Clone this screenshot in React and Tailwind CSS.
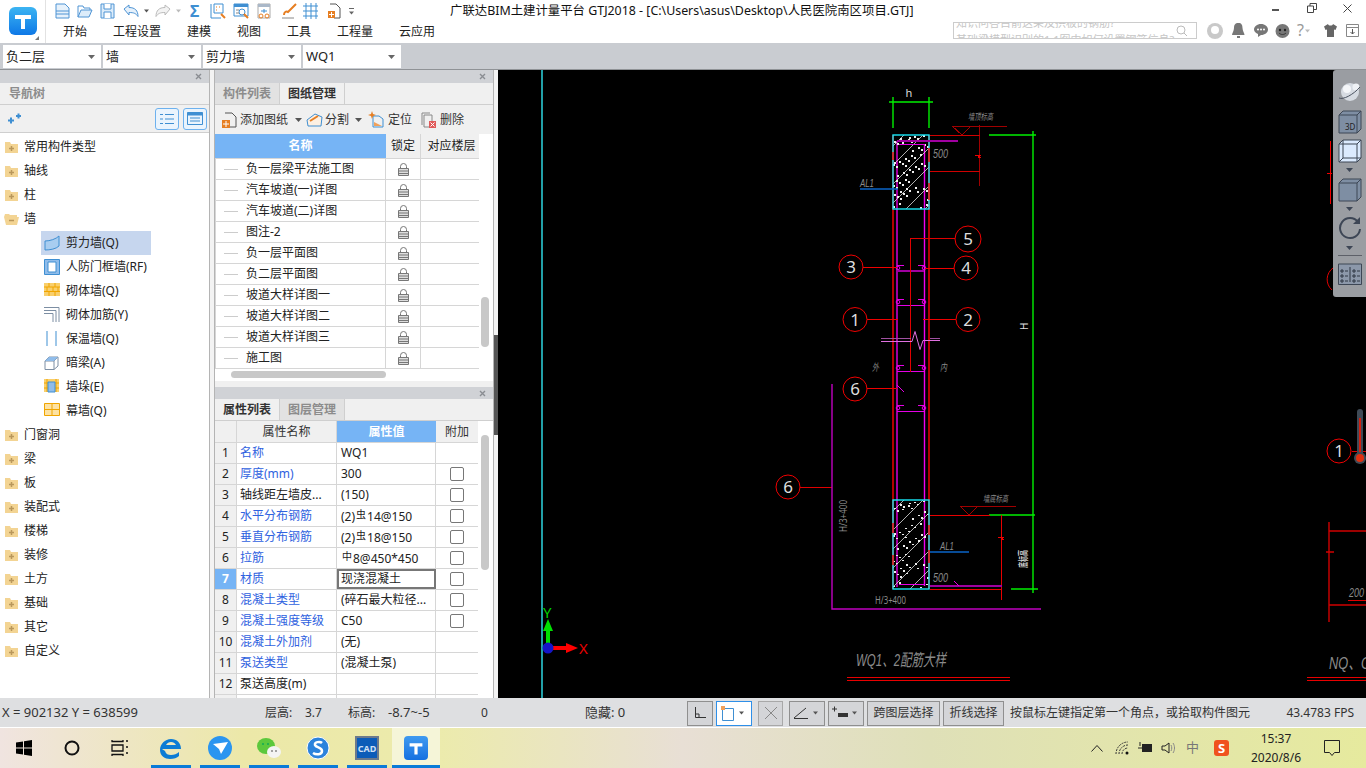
import React from 'react'

const menus = ['开始', '工程设置', '建模', '视图', '工具', '工程量', '云应用']
const combos = ['负二层', '墙', '剪力墙', 'WQ1']
const folders1 = ['常用构件类型', '轴线', '柱']
const folders2 = ['门窗洞', '梁', '板', '装配式', '楼梯', '装修', '土方', '基础', '其它', '自定义']
const drawings = ['负一层梁平法施工图', '汽车坡道(一)详图', '汽车坡道(二)详图', '图注-2', '负一层平面图', '负二层平面图', '坡道大样详图一', '坡道大样详图二', '坡道大样详图三', '施工图']

const Up = ({ children }) => <span className="text-[10px] align-[3px] mx-[1px]">{children}</span>

const props = [
  { name: '名称', value: 'WQ1', blue: true },
  { name: '厚度(mm)', value: '300', blue: true, check: true },
  { name: '轴线距左墙皮...', value: '(150)', check: true },
  { name: '水平分布钢筋', value: <>(2)<Up>虫</Up>14@150</>, blue: true, check: true },
  { name: '垂直分布钢筋', value: <>(2)<Up>虫</Up>18@150</>, blue: true, check: true },
  { name: '拉筋', value: <><Up>中</Up>8@450*450</>, blue: true, check: true },
  { name: '材质', value: '现浇混凝土', blue: true, check: true, active: true },
  { name: '混凝土类型', value: '(碎石最大粒径...', blue: true, check: true },
  { name: '混凝土强度等级', value: 'C50', blue: true, check: true },
  { name: '混凝土外加剂', value: '(无)', blue: true },
  { name: '泵送类型', value: '(混凝土泵)', blue: true },
  { name: '泵送高度(m)', value: '' },
]

const Caret = ({ className = '' }) => (
  <svg width="7" height="4" viewBox="0 0 7 4" className={className}><path d="M0 0h7L3.5 4z" fill="currentColor" /></svg>
)

const Close = () => (
  <svg width="7" height="7" viewBox="0 0 7 7" className="text-[#8a8d92]"><path d="M1 1l5 5M6 1L1 6" stroke="currentColor" strokeWidth="1.4" /></svg>
)

// quick access toolbar icons
const Ico = ({ w = 16, h = 16, children }) => (
  <svg width={w} height={h} viewBox={`0 0 ${w} ${h}`} fill="none" className="shrink-0">{children}</svg>
)

const TitleBar = () => (
  <div className="flex h-[43px] bg-white relative shrink-0">
    <div className="w-[46px] h-full border-r border-[#e2e2e2] flex items-center justify-center shrink-0 relative">
      <div className="w-7 h-7 rounded-md bg-gradient-to-b from-[#3cb4f2] to-[#0f78e6] flex items-center justify-center -mt-[1px]">
        <svg width="20" height="20" viewBox="0 0 20 20"><path d="M2 4h16v4h-6v10H8V8H2z" fill="#fff" /></svg>
      </div>
      <svg width="4" height="4" viewBox="0 0 4 4" className="absolute right-[6px] bottom-[3px]"><path d="M4 0v4H0z" fill="#777" /></svg>
    </div>
    <div className="flex flex-col pl-[9px] w-[400px] shrink-0">
      <div className="flex items-center h-[21px] pt-[1px]">
        <Ico w={15}><path d="M1 1h9l4 4v10H1z" stroke="#4f94d4" fill="#e6f1fb" /><path d="M1 8h13M1 11h13" stroke="#4f94d4" /></Ico>
        <span className="ml-[7px]"><Ico><path d="M1 14V3h5l1 2h6v2" stroke="#4f94d4" /><path d="M1 14l3-7h11l-3 7z" stroke="#4f94d4" fill="#dcecfa" /></Ico></span>
        <span className="ml-[7px]"><Ico w={15}><path d="M1 1h13v14H1z" stroke="#4f94d4" fill="#dcecfa" /><path d="M4 1v5h7V1M4 15v-6h7v6" stroke="#4f94d4" fill="#fff" /></Ico></span>
        <span className="ml-[8px] flex items-center gap-[5px]">
          <svg width="16" height="14" viewBox="0 0 16 14" fill="none"><path d="M1 5l5-4v2.500c6 0 9 3 9 9-2-3-4-4-9-4V11z" stroke="#4f94d4" fill="#e6f1fb" /></svg>
          <Caret className="text-[#555] w-[5px]" />
        </span>
        <span className="ml-[6px] flex items-center gap-[5px]">
          <svg width="16" height="14" viewBox="0 0 16 14" fill="none"><path d="M15 5l-5-4v2.500c-6 0-9 3-9 9 2-3 4-4 9-4V11z" stroke="#bbb" fill="#f3f3f3" /></svg>
          <Caret className="text-[#bbb] w-[5px]" />
        </span>
        <span className="ml-[9px] text-[#3f8fd2] text-[16px] leading-none font-bold w-[10px]">Σ</span>
        <span className="ml-[10px]"><Ico><path d="M1 1v14h10M4 1h9v9H4z" stroke="#3f8fd2" /><path d="M6 4h1M9 4h1M6 7h1" stroke="#e67e22" /><path d="M11 11l4 4" stroke="#e67e22" strokeWidth="2" /></Ico></span>
        <span className="ml-[7px]"><Ico><path d="M1 1h14v12H1z" stroke="#3f8fd2" /><path d="M1 1h14v3H1z" fill="#3f8fd2" /><circle cx="9" cy="9" r="3" stroke="#3f8fd2" /><path d="M3 7h3M3 10h3" stroke="#888" /><path d="M11 11l4 4" stroke="#e67e22" strokeWidth="2" /></Ico></span>
        <span className="ml-[8px]"><Ico w={14}><path d="M1 1h12v14H1z" stroke="#aaa" /><path d="M1 1h12v3H1z" fill="#aab8c8" /><path d="M4 8h6M7 6v4" stroke="#3f8fd2" /><circle cx="4" cy="13" r="2" stroke="#e67e22" /><circle cx="10" cy="13" r="2" stroke="#e67e22" /></Ico></span>
        <span className="ml-[10px]"><Ico><path d="M1 15h12" stroke="#888" /><path d="M3 12c0-3 2-4 4-3l8-8" stroke="#e67e22" strokeWidth="2" /></Ico></span>
        <span className="ml-[5px]"><Ico><path d="M1 3h15M1 8h15M1 13h15M4 0v16M9 0v16M14 0v16" stroke="#3f8fd2" /></Ico></span>
        <span className="ml-[9px]"><Ico w={14}><path d="M3 1h6l4 4v10H7" stroke="#555" /><path d="M1 8h7v7H1z" fill="#e67e22" /><path d="M4.500 9v5M2 11.500h5" stroke="#fff" /></Ico></span>
        <span className="ml-[8px] flex flex-col items-center gap-[2px]"><span className="w-[5px] h-[1px] bg-[#666]" /><Caret className="text-[#666] w-[5px]" /></span>
      </div>
      <div className="flex items-center h-[22px] pl-[8px] gap-[26px] text-xs text-[#222]">
        {menus.map((m) => <span key={m}>{m}</span>)}
      </div>
    </div>
    <div className="absolute left-[450px] top-[3px] text-[12.4px] leading-[15px] text-[#111] whitespace-nowrap">
      广联达BIM土建计量平台 GTJ2018 - [C:\Users\asus\Desktop\人民医院南区项目.GTJ]
    </div>
    <div className="absolute right-[14px] top-[3px] flex items-center">
      <span className="w-[7px] h-[2px] bg-[#555] mt-[3px]" />
      <svg width="10" height="10" viewBox="0 0 10 10" fill="none" className="ml-[28px]"><path d="M0.500 3h6v6.500h-6zM3 3V0.500h6.500v6H7" stroke="#444" /></svg>
      <svg width="9" height="9" viewBox="0 0 9 9" className="ml-[26px]"><path d="M0.500 0.500l8 8M8.500 0.500l-8 8" stroke="#444" /></svg>
    </div>
    <div className="ml-auto mr-[7px] mt-[22px] h-[17px] flex items-center">
      <div className="w-[244px] h-[17px] border border-[#ccc] overflow-hidden flex items-center relative mr-[10px]">
        <div className="text-[11px] leading-[17px] text-[#c6c6c6] pl-[2px] whitespace-nowrap">
          <div>知识问答目前这果及拱板的钢筋?</div>
          <div>基础梁模型识别的1:1图中如何设置钢筋信息?</div>
        </div>
        <svg width="12" height="12" viewBox="0 0 12 12" fill="none" className="absolute right-[8px] top-[2px]"><circle cx="5" cy="5" r="4" stroke="#bbb" /><path d="M8 8l3 3" stroke="#bbb" /></svg>
      </div>
      <svg width="16" height="16" viewBox="0 0 16 16"><circle cx="8" cy="8" r="8" fill="#c9c9c9" /><circle cx="8" cy="7" r="4" fill="#fff" /></svg>
      <svg width="13" height="15" viewBox="0 0 13 15" className="ml-[9px]"><path d="M6.500 0c3 0 4 2 4 5 0 3 2 5 2 7H0c0-2 2-4 2-7 0-3 1-5 4.500-5zM5 13h3v2H5z" fill="#777" /></svg>
      <svg width="14" height="13" viewBox="0 0 14 13" className="ml-[9px]"><path d="M7 0c4 0 7 2.500 7 5.500S11 11 7 11l-3 2v-3C2 9 0 7.500 0 5.500 0 2.500 3 0 7 0z" fill="#777" /><circle cx="4" cy="5.500" r="1" fill="#fff" /><circle cx="7" cy="5.500" r="1" fill="#fff" /><circle cx="10" cy="5.500" r="1" fill="#fff" /></svg>
      <svg width="15" height="15" viewBox="0 0 15 15" className="ml-[7px]"><circle cx="7.500" cy="8" r="7" fill="#777" /><circle cx="5" cy="7" r="1.200" fill="#222" /><circle cx="10" cy="7" r="1.200" fill="#222" /><path d="M4 10c2 2 5 2 7 0" stroke="#333" fill="none" /></svg>
      <span className="ml-[7px] flex items-center gap-[1px] text-[#999] text-[16px] leading-[15px]">?<Caret className="text-[#bbb] w-[5px]" /></span>
      <svg width="13" height="13" viewBox="0 0 13 13" className="ml-[14px]"><path d="M4 0L0 2.500 1.500 6 3 5.500V13h7V5.500L11.500 6 13 2.500 9 0c-.5 2-4.500 2-5 0z" fill="#666" /></svg>
      <svg width="13" height="13" viewBox="0 0 13 13" fill="none" className="ml-[9px]"><path d="M.5.5h12v12H.5zM.5 3.500h12" stroke="#888" /><path d="M6.500 5v5M4.500 8l2 2 2-2" stroke="#555" /></svg>
    </div>
  </div>
)

const ComboBar = () => (
  <div className="flex h-[27px] bg-[#c9ccd1] border-b border-[#8f9296] pl-[3px] pt-[2px] gap-[2px] shrink-0">
    {combos.map((c) => (
      <div key={c} className="w-[98px] h-[23px] bg-white flex items-center justify-between pl-[3px] pr-[6px] text-[13px] text-[#222]">
        <span>{c}</span>
        <Caret className="text-[#666]" />
      </div>
    ))}
  </div>
)

const Folder = ({ open }) => (
  <svg width="15" height="13" viewBox="0 0 15 13" className="shrink-0">
    {open
      ? <path d="M0 4l1-3h4l1 1h7v2h2l-2 8H2z" fill="#f3d493" />
      : <path d="M1 1h5l1 2h7v9H1z" fill="#f3d493" />}
    {open
      ? <path d="M5 7.500h5" stroke="#b9975b" strokeWidth="1.500" />
      : <path d="M5 7.500h5M7.500 5v5" stroke="#b9975b" strokeWidth="1.500" />}
  </svg>
)

const FolderRow = ({ label, open }) => (
  <div className="h-6 flex items-center pl-[4px] gap-[5px] text-xs text-[#222]">
    <Folder open={open} />
    <span>{label}</span>
  </div>
)

const wallIcons = {
  shear: <path d="M1 6c5 0 11-2 14-5v10c-3 3-9 4-14 4z" fill="#a8cdf0" stroke="#3f8fd2" />,
  civil: <><path d="M0.500 0.500h15v15h-15z" fill="#8fbcea" stroke="#3f8fd2" /><path d="M4 3h8v10H4z" fill="#fff" stroke="#3f8fd2" /></>,
  brick: <><path d="M0 0h16v13H0z" fill="#f9cf6c" /><path d="M0 4h16M0 8.500h16M5 0v4M11 0v4M3 4v4.500M9 4v4.500M14 4v4.500M5 8.500V13M11 8.500V13" stroke="#f0a500" /></>,
  rebar: <path d="M0 .5h15V15M0 3.500h12V15M0 6.500h9V15" stroke="#7c8ea3" fill="none" />,
  heat: <path d="M3 0v15M12 0v15" stroke="#3f8fd2" fill="none" />,
  beam: <><path d="M1 6l4-4h9v9l-4 3.500H1z" fill="#fff" stroke="#7c8ea3" /><path d="M1 6h9v8.500M10 6l4-4" stroke="#7c8ea3" fill="none" /><path d="M1 6l4-4h9l-4 4z" fill="#8fbcea" /></>,
  pier: <><path d="M0 0h15v13H0z" fill="#f9cf6c" /><path d="M3 0v13M12 0v13M0 4h15M0 9h15" stroke="#f0a500" /><path d="M4 3h7v10H4z" fill="#8fbcea" stroke="#3f8fd2" /></>,
  curtain: <><path d="M.5.5h15v12H.5z" fill="#fde2a2" stroke="#f0a500" /><path d="M0 6.500h16M8 0v13" stroke="#f0a500" /></>,
}

const walls = [
  ['shear', '剪力墙(Q)'], ['civil', '人防门框墙(RF)'], ['brick', '砌体墙(Q)'], ['rebar', '砌体加筋(Y)'],
  ['heat', '保温墙(Q)'], ['beam', '暗梁(A)'], ['pier', '墙垛(E)'], ['curtain', '幕墙(Q)'],
]

const NavPanel = () => (
  <div className="w-[210px] shrink-0 border-r border-[#b4b4b4] bg-white flex flex-col">
    <div className="h-[13px] bg-[#d0d2d6] flex items-center justify-end pr-[7px]"><Close /></div>
    <div className="h-[22px] bg-[#f0f0f0] border-b border-[#cfcfcf] flex items-center pl-[9px] text-xs font-bold text-[#8c8c8c]">导航树</div>
    <div className="h-[28px] bg-[#f0f0f0] border-b border-[#cfcfcf] flex items-center pl-[8px] pr-[2px] shrink-0">
      <svg width="13" height="11" viewBox="0 0 13 11"><path d="M0 7.500h6M3 4.500v6M8 3h5M10.500 0.500v5" stroke="#3f8fd2" strokeWidth="2" /></svg>
      <div className="ml-auto flex gap-[4px]">
        <div className="w-[24px] h-[22px] rounded-[3px] border border-[#6db1ee] bg-[#eaf4fd] flex items-center justify-center">
          <svg width="14" height="12" viewBox="0 0 14 12" fill="none"><path d="M0 1.500h3M0 6h3M0 10.500h3M5 1.500h9M5 6h9M5 10.500h9" stroke="#3f8fd2" /></svg>
        </div>
        <div className="w-[24px] h-[22px] rounded-[3px] border border-[#6db1ee] bg-[#eaf4fd] flex items-center justify-center">
          <svg width="16" height="13" viewBox="0 0 16 13" fill="none"><path d="M.5.5h15v12H.5z" stroke="#3f8fd2" /><path d="M.5.5h15v3H.5z" fill="#3f8fd2" /><path d="M3 6h10M3 9h10" stroke="#3f8fd2" /></svg>
        </div>
      </div>
    </div>
    <div className="flex flex-col pt-[2px]">
      {folders1.map((f) => <FolderRow key={f} label={f} />)}
      <FolderRow label="墙" open />
      {walls.map(([k, label], i) => (
        <div key={k} className={`h-6 flex items-center text-xs text-[#222] ml-[41px] w-[110px] pl-[3px] gap-[6px] ${i === 0 ? 'bg-[#c6d6ee]' : ''}`}>
          <svg width="16" height="16" viewBox="0 0 16 16" className="shrink-0">{wallIcons[k]}</svg>
          <span className="whitespace-nowrap">{label}</span>
        </div>
      ))}
      {folders2.map((f) => <FolderRow key={f} label={f} />)}
    </div>
  </div>
)

const Tabs = ({ left, right, activeFirst }) => (
  <div className="h-[22px] bg-[#f0f0f0] border-b border-[#cfcfcf] flex text-xs font-bold shrink-0">
    <div className={`w-[65px] flex items-center justify-center border-r border-[#cfcfcf] ${activeFirst ? 'text-[#333] bg-[#f0f0f0]' : 'text-[#8c8c8c] bg-[#e2e2e2]'}`}>{left}</div>
    <div className={`w-[65px] flex items-center justify-center border-r border-[#cfcfcf] ${activeFirst ? 'text-[#8c8c8c] bg-[#e2e2e2]' : 'text-[#333] bg-[#f0f0f0]'}`}>{right}</div>
  </div>
)

const Lock = () => (
  <svg width="11" height="13" viewBox="0 0 11 13" fill="none"><path d="M2.500 6V3.500a3 3 0 016 0V6" stroke="#777" /><path d="M.5 5.500h10v7H.5z" fill="#ddd" stroke="#777" /><path d="M.5 8h10M.5 10.500h10" stroke="#777" /></svg>
)

const DrawingPanel = () => (
  <div className="h-[311px] flex flex-col shrink-0 bg-white relative">
    <div className="h-[13px] bg-[#d0d2d6] flex items-center justify-end pr-[7px] shrink-0"><Close /></div>
    <Tabs left="构件列表" right="图纸管理" />
    <div className="h-[29px] bg-[#f0f0f0] flex items-center pl-[7px] text-xs text-[#333] shrink-0">
      <svg width="15" height="16" viewBox="0 0 15 16" fill="none"><path d="M3 1h7l4 4v10H7" stroke="#555" /><path d="M0 8h8v8H0z" fill="#e67e22" /><path d="M4 9v6M1 12h6" stroke="#fff" /></svg>
      <span className="ml-[3px]">添加图纸</span>
      <Caret className="ml-[7px] text-[#555]" />
      <svg width="17" height="15" viewBox="0 0 17 15" fill="none" className="ml-[4px]"><path d="M1 8l8-6 7 3-1 9H2z" stroke="#3f8fd2" fill="#fdf0e2" /><path d="M4 9l8-5" stroke="#e67e22" strokeWidth="2" /></svg>
      <span className="ml-[2px]">分割</span>
      <Caret className="ml-[6px] text-[#555]" />
      <svg width="16" height="17" viewBox="0 0 16 17" fill="none" className="ml-[6px]"><path d="M5 5h6l4 3v8H5z" stroke="#3f8fd2" /><path d="M6 11l8 4H6z" fill="#f0a05a" /><path d="M4 0l1 3 3 1-3 1-1 3-1-3-3-1 3-1z" fill="#e67e22" /></svg>
      <span className="ml-[4px]">定位</span>
      <svg width="15" height="16" viewBox="0 0 15 16" fill="none" className="ml-[9px]"><path d="M1 13V1h8M3 15V3h8v12z" stroke="#888" /><path d="M8 9h7v7H8z" fill="#e05a5a" /><path d="M9.500 10.500l4 4M13.500 10.500l-4 4" stroke="#fff" /></svg>
      <span className="ml-[4px]">删除</span>
    </div>
    <div className="w-[264px] text-xs text-[#222] overflow-hidden">
      <div className="flex h-[25px] border-b border-[#d6d6d6] bg-[#f0f0f0]">
        <div className="w-[171px] bg-[#76b4f5] text-white font-bold flex items-center justify-center">名称</div>
        <div className="w-[35px] flex items-center justify-center border-r border-[#d6d6d6]">锁定</div>
        <div className="flex-1 flex items-center justify-center pl-[3px]">对应楼层</div>
      </div>
      {drawings.map((d) => (
        <div key={d} className="flex h-[21px] border-b border-[#d6d6d6] border-l">
          <div className="w-[170px] flex items-center border-r border-[#d6d6d6] pl-[8px]">
            <span className="w-[14px] h-[1px] bg-[#ccc] shrink-0" />
            <span className="ml-[8px] whitespace-nowrap">{d}</span>
          </div>
          <div className="w-[35px] flex items-center justify-center border-r border-[#d6d6d6]"><Lock /></div>
          <div className="flex-1" />
        </div>
      ))}
    </div>
    <div className="absolute right-[4px] top-[227px] w-[8px] h-[50px] rounded bg-[#c8c8c8]" />
    <div className="absolute left-[16px] top-[301px] w-[155px] h-[7px] rounded bg-[#c8c8c8]" />
  </div>
)

const PropRow = ({ i, row }) => (
  <div className="flex h-[21px] border-b border-[#d6d6d6] text-xs text-[#222]">
    <div className={`w-[22px] flex items-center justify-center border-r border-[#d6d6d6] ${row.active ? 'bg-[#76b4f5] text-white font-bold' : 'bg-[#f0f0f0]'}`}>{i}</div>
    <div className={`w-[100px] flex items-center pl-[3px] border-r border-[#d6d6d6] whitespace-nowrap ${row.blue ? 'text-[#2f62e0]' : ''}`}>{row.name}</div>
    <div className={`w-[99px] flex items-center whitespace-nowrap ${row.active ? 'border-2 border-[#777] pl-[2px]' : 'border-r border-[#d6d6d6] pl-[4px]'}`}><span>{row.value}</span></div>
    <div className="w-[42px] flex items-center justify-center">
      {row.check && <span className="w-[14px] h-[14px] rounded-[2px] border border-[#777] bg-white" />}
    </div>
  </div>
)

const PropPanel = () => (
  <div className="flex-1 flex flex-col bg-white relative overflow-hidden">
    <div className="h-[12px] bg-[#d0d2d6] flex items-center justify-end pr-[7px] shrink-0"><Close /></div>
    <Tabs left="属性列表" right="图层管理" activeFirst />
    <div className="w-[263px]">
      <div className="flex h-[22px] border-b border-[#d6d6d6] bg-[#f0f0f0] text-xs text-[#333]">
        <div className="w-[22px] border-r border-[#d6d6d6]" />
        <div className="w-[100px] flex items-center justify-center border-r border-[#d6d6d6]">属性名称</div>
        <div className="w-[99px] bg-[#76b4f5] text-white font-bold flex items-center justify-center">属性值</div>
        <div className="w-[42px] flex items-center justify-center">附加</div>
      </div>
      {props.map((r, i) => <PropRow key={r.name} i={i + 1} row={r} />)}
      <div className="flex h-[10px]">
        <div className="w-[22px] bg-[#f0f0f0] border-r border-[#d6d6d6]" />
        <div className="w-[100px] border-r border-[#d6d6d6]" />
        <div className="w-[99px] border-r border-[#d6d6d6]" />
      </div>
    </div>
    <div className="absolute right-[4px] top-[48px] w-[8px] h-[135px] rounded bg-[#c8c8c8]" />
  </div>
)

// concrete fill for the wall end blocks
const dots = Array.from({ length: 90 }, (_, i) => [(i * 37) % 36, (i * 23 + (i % 5) * 7) % 74, 0.5 + (i % 3) * 0.25])

const Hatch = ({ y, h, id }) => (
  <g>
    <clipPath id={id}><rect x="893" y={y} width="36" height={h} /></clipPath>
    <g clipPath={`url(#${id})`}>
      {[0, 1, 2, 3, 4, 5, 6, 7].map((n) => (
        <line key={n} x1={885} y1={y + n * 19} x2={945} y2={y + n * 19 - 60} stroke="#ddd" strokeWidth="0.8" />
      ))}
      {dots.map(([dx, dy, r], i) => <circle key={i} cx={893 + dx} cy={y + (dy * h) / 74} r={r} fill="#eee" />)}
    </g>
    <rect x="893" y={y} width="36" height={h} fill="none" stroke="#18e8f8" strokeWidth="1.400" shapeRendering="geometricPrecision" />
  </g>
)

const Bubble = ({ x, y, t, r = 12 }) => (
  <g shapeRendering="geometricPrecision">
    <circle cx={x} cy={y} r={r} stroke="#f00000" fill="none" />
    <text x={x} y={y + 6} textAnchor="middle" fontSize="17" fill="#ddd">{t}</text>
  </g>
)

const Rung = ({ y }) => (
  <g stroke="#e600e6" fill="none">
    <path d={`M897 ${y + 0.5}h27`} />
    <path d={`M897 ${y - 5.5}h7M924 ${y - 5.5}h-6`} />
    <circle cx="898" cy={y - 3} r="1.800" shapeRendering="geometricPrecision" />
    <circle cx="924" cy={y - 3} r="1.800" shapeRendering="geometricPrecision" />
  </g>
)

const grayText = { fill: '#8a8a8a', fontStyle: 'italic', fontFamily: "'Liberation Sans', 'Noto Sans CJK SC', sans-serif", lengthAdjust: 'spacingAndGlyphs' }

const Drawing = () => (
  <svg className="w-full h-full block" viewBox="498 70 868 628" shapeRendering="crispEdges">
    <path d="M541 70h2v628h-2z" fill="#22a0a8" />
    {/* axes */}
    <path d="M546 648v-18h4v18z" fill="#00e000" />
    <path d="M543 631l5-12 5 12z" fill="#00e000" shapeRendering="geometricPrecision" />
    <path d="M552 646h14v4h-14z" fill="#ff0000" />
    <path d="M566 643l12 5-12 5z" fill="#ff0000" shapeRendering="geometricPrecision" />
    <circle cx="548" cy="648" r="5.500" fill="#1414c8" shapeRendering="geometricPrecision" />
    <text x="543" y="618" fontSize="15" fill="#00d000">Y</text>
    <text x="579" y="654" fontSize="15" fill="#e80000">X</text>

    {/* dimension lines */}
    <g stroke="#00f000" fill="none" strokeWidth="1.400" shapeRendering="geometricPrecision">
      <path d="M889 102h44M893 97v31M929 97v31" />
      <path d="M989 135h47M1033 131v462M1011 589h27M989 515h46" />
    </g>
    <text x="909" y="97" textAnchor="middle" fontSize="11" fill="#ddd">h</text>
    <text x="1028" y="330" fontSize="10" fill="#ddd" transform="rotate(-90 1028 330)">H</text>

    {/* wall */}
    <g fill="none" strokeWidth="1.400" shapeRendering="geometricPrecision">
      <path d="M893 135v454M929 135v454" stroke="#ff0000" />
      <path d="M924.500 144v442" stroke="#f000f0" />
    </g>
    <path d="M896 141h2v446h-2z" fill="#a000a0" />
    <Hatch y={135} h={74} id="hatch-top" />
    <Hatch y={500} h={89} id="hatch-bottom" />
    <path d="M893 152v8M929 148v14M929 183v17M893 523v10M893 555v10M929 525v10M929 550v13" stroke="#ff0000" strokeWidth="1.400" shapeRendering="geometricPrecision" />
    <path d="M897 140h61v2h-61z" fill="#a000a0" />
    <path d="M899 144.500h24q2 0 2 2M899 584.500h26" stroke="#e600e6" fill="none" />
    <Rung y={271} />
    <Rung y={305} />
    <Rung y={371} />
    <Rung y={411} />
    <path d="M897 270h27v2h-27z" fill="#a000a0" />

    {/* top level mark */}
    <path d="M952 126h55M952 126l10 9 9-9M979.500 125v61" stroke="#a00000" fill="none" />
    <path d="M930 135.500h50M930 171.500h50" stroke="#d00000" />
    <path d="M975 155h6l-3 2 3 1" stroke="#f00000" fill="none" />
    <text x="968" y="120" fontSize="9" textLength="25" {...grayText}>墙顶标高</text>
    <text x="933" y="158" fontSize="12" textLength="15" {...grayText}>500</text>
    <text x="860" y="187" fontSize="11" textLength="14" {...grayText}>AL1</text>
    <path d="M860 189h38" stroke="#0a64c8" strokeWidth="1.400" shapeRendering="geometricPrecision" />

    {/* callouts */}
    <path d="M955 238.500h-45v133" stroke="#e00000" fill="none" />
    <path d="M863 267.500h34M925 268.500h29M867 319.500h31M923 319.500h33M867 388.500h30" stroke="#f00000" />
    <Bubble x={968} y={239} t="5" r={13} />
    <Bubble x={851} y={267} t="3" />
    <Bubble x={966} y={268} t="4" />
    <Bubble x={855} y={319.500} t="1" />
    <Bubble x={968} y={319.500} t="2" />
    <Bubble x={855} y={389} t="6" />
    <Bubble x={788} y={487} t="6" />
    <path d="M897 385l7 7" stroke="#e600e6" />
    <path d="M800 487.500h32" stroke="#e00000" />

    {/* break mark */}
    <path d="M881 338.500h30M930 338.500h10" stroke="#a050a0" />
    <path d="M881 341.500h31l3-10 5 18 3-9h17" stroke="#e070e0" fill="none" shapeRendering="geometricPrecision" />
    <text x="872" y="371" fontSize="10" textLength="7" {...grayText}>外</text>
    <text x="940" y="371" fontSize="10" textLength="7" {...grayText}>内</text>

    {/* stirrup dimension frame */}
    <path d="M832 384v225h209" stroke="#c000c0" fill="none" strokeWidth="1.400" shapeRendering="geometricPrecision" />
    <text x="847" y="532" fontSize="11" textLength="32" lengthAdjust="spacingAndGlyphs" fill="#8a8a8a" transform="rotate(-90 847 532)">H/3+400</text>
    <text x="875" y="604" fontSize="11" textLength="31" lengthAdjust="spacingAndGlyphs" fill="#8a8a8a">H/3+400</text>

    {/* bottom level mark */}
    <path d="M960 506h56M960 506l9 9 9-9" stroke="#a00000" fill="none" />
    <path d="M930 515.500h60M1001.500 515v85M930 589.500h72" stroke="#e80000" />
    <path d="M998 537h6l-3 2 3 1" stroke="#f00000" fill="none" />
    <text x="983" y="502" fontSize="9" textLength="25" {...grayText}>墙底标高</text>
    <text x="940" y="550" fontSize="11" textLength="14" {...grayText}>AL1</text>
    <path d="M930 552h39" stroke="#0a64c8" strokeWidth="1.400" shapeRendering="geometricPrecision" />
    <text x="933" y="582" fontSize="12" textLength="15" {...grayText}>500</text>
    <path d="M930 585h72v2h-72z" fill="#a000a0" />
    <path d="M954 581l5 5" stroke="#e600e6" />
    <text x="1027" y="568" fontSize="10" textLength="18" lengthAdjust="spacingAndGlyphs" fill="#ccc" fontWeight="bold" transform="rotate(-90 1027 568)">底标高</text>

    {/* title */}
    <text x="856" y="666" fontSize="17" textLength="90" {...grayText}>WQ1、2配筋大样</text>
    <path d="M847 677.500h163M847 680.500h163" stroke="#e80000" />

    {/* next detail, cut by the window edge */}
    <path d="M1330.500 141v63M1327 173.500h5" stroke="#f00000" fill="none" />
    <path d="M1333 268a14 14 0 00-1 22" stroke="#e00000" fill="none" shapeRendering="geometricPrecision" />
    <Bubble x={1339} y={451} t="1" />
    <path d="M1352 451.500h14" stroke="#e00000" />
    <rect x="1357" y="409" width="6" height="52" rx="3" fill="#3f4a56" shapeRendering="geometricPrecision" />
    <path d="M1360 418v38" stroke="#d02010" strokeWidth="1.500" />
    <circle cx="1360" cy="458" r="6" fill="#3f4a56" shapeRendering="geometricPrecision" />
    <circle cx="1360" cy="458" r="4" fill="#e03010" shapeRendering="geometricPrecision" />
    <path d="M1329 522v100M1329 531h37M1329 605h37M1326 552h8" stroke="#d00000" strokeWidth="1.400" fill="none" shapeRendering="geometricPrecision" />
    <path d="M1348 600.500h18" stroke="#e00000" />
    <text x="1349" y="597" fontSize="12" textLength="15" {...grayText}>200</text>
    <text x="1329" y="669" fontSize="17" textLength="42" {...grayText}>NQ、G</text>
    <path d="M1307 677.500h59M1307 680.500h59" stroke="#e80000" />
  </svg>
)

const CadTools = () => (
  <div className="absolute right-0 top-0 w-[33px] h-[227px] rounded-l-[3px] bg-[#9a9da2] flex flex-col items-center pt-[11px]">
    <svg width="24" height="22" viewBox="0 0 24 22">
      <circle cx="12" cy="11" r="9" fill="#d6dbe2" />
      <circle cx="9" cy="8" r="4" fill="#f4f6f9" />
      <circle cx="18" cy="6" r="3.500" fill="#eef1f5" />
      <path d="M1 17c4 2 14-3 21-11" stroke="#4a5260" fill="none" />
    </svg>
    <svg width="24" height="24" viewBox="0 0 24 24" className="mt-[7px]"><path d="M1 5l4-4h18v18l-4 4H1z" fill="#7e8ea3" stroke="#3d4655" /><path d="M1 5h18v18M19 5l4-4" stroke="#3d4655" fill="none" /><text x="7" y="20" fontSize="8" fill="#222">3D</text></svg>
    <svg width="24" height="24" viewBox="0 0 24 24" className="mt-[5px]"><path d="M1 5l4-4h18v18l-4 4H1z" fill="#dbeafe" stroke="#3d4655" /><path d="M1 5h18v18M19 5l4-4M5 1v18h18M5 19l-4 4" stroke="#3d4655" fill="none" /></svg>
    <Caret className="text-[#3d4655] mt-[5px]" />
    <svg width="24" height="24" viewBox="0 0 24 24" className="mt-[6px]"><path d="M1 5l4-4h18v18l-4 4H1z" fill="#7e8ea3" stroke="#3d4655" /><path d="M1 5h18v18M19 5l4-4" stroke="#3d4655" fill="none" /></svg>
    <Caret className="text-[#3d4655] mt-[5px]" />
    <svg width="24" height="24" viewBox="0 0 24 24" className="mt-[5px]" fill="none"><path d="M20 6a10 10 0 102 7" stroke="#3d4655" strokeWidth="2" /><path d="M22 1v7h-7z" fill="#3d4655" /></svg>
    <Caret className="text-[#3d4655] mt-[6px]" />
    <div className="w-[24px] h-[1px] bg-[#5d6068] mt-[5px] shrink-0" />
    <svg width="24" height="23" viewBox="0 0 24 23" className="mt-[6px]" fill="none"><path d="M.5 2h23v20.500H.5z" fill="#8c98aa" stroke="#3d4655" /><path d="M12 5v15M3 8h2v2H3zM3 13h2v2H3zM3 18h2v2H3zM15 8h2v2h-2zM15 13h2v2h-2zM15 18h2v2h-2zM7 9h3M7 14h3M7 19h3M19 9h3M19 14h3M19 19h3" stroke="#2f3642" /></svg>
  </div>
)

const StatusBar = () => (
  <div className="h-[30px] bg-[#dedfe1] flex items-center text-xs text-[#333] shrink-0 border-b border-white pt-[1px]">
    <span className="ml-[2px] w-[263px] whitespace-nowrap text-[13px]">X = 902132 Y = 638599</span>
    <span className="w-[40px]">层高:</span>
    <span className="w-[43px]">3.7</span>
    <span className="w-[40px]">标高:</span>
    <span className="w-[93px] text-[13px]">-8.7~-5</span>
    <span className="w-[104px]">0</span>
    <span className="w-[102px] text-[13px]">隐藏: 0</span>
    <div className="flex items-center gap-[3px]">
      <div className="w-[26px] h-[25px] bg-[#d4d5d8] border border-[#8f8f8f] flex items-center justify-center">
        <svg width="12" height="12" viewBox="0 0 12 12" fill="none"><path d="M1.500 0v10.500H12M1.500 7H5v3.500" stroke="#333" /></svg>
      </div>
      <div className="w-[36px] h-[25px] bg-white border border-[#2e8fe8] flex items-center pl-[4px] gap-[4px]">
        <svg width="14" height="15" viewBox="0 0 14 15" fill="none"><path d="M1.500 2.500h11v12h-11z" stroke="#3f8fd2" /><path d="M0 0h4v4H0z" fill="#f0a05a" /></svg>
        <Caret className="text-[#555] w-[5px]" />
      </div>
      <div className="w-[25px] h-[25px] ml-[3px] bg-[#d4d5d8] border border-[#a8a8a8] flex items-center justify-center">
        <svg width="14" height="14" viewBox="0 0 14 14"><path d="M1 1l12 12M13 1L1 13" stroke="#888" /></svg>
      </div>
      <div className="w-[36px] h-[25px] ml-[3px] bg-[#d4d5d8] border border-[#8f8f8f] flex items-center pl-[3px] gap-[4px]">
        <svg width="16" height="14" viewBox="0 0 16 14" fill="none"><path d="M1 12L13 2M1 12.500h14" stroke="#333" /></svg>
        <Caret className="text-[#555] w-[5px]" />
      </div>
      <div className="w-[36px] h-[25px] bg-[#d4d5d8] border border-[#8f8f8f] flex items-center pl-[3px] gap-[4px]">
        <svg width="16" height="14" viewBox="0 0 16 14" fill="none"><path d="M0 3h5M2.500 .5v5" stroke="#333" /><path d="M6 7h10v4H6z" fill="#333" /></svg>
        <Caret className="text-[#555] w-[5px]" />
      </div>
      <div className="w-[73px] h-[25px] bg-[#d4d5d8] border border-[#8f8f8f] flex items-center justify-center">跨图层选择</div>
      <div className="w-[61px] h-[25px] bg-[#d4d5d8] border border-[#8f8f8f] flex items-center justify-center">折线选择</div>
    </div>
    <span className="ml-[6px] whitespace-nowrap">按鼠标左键指定第一个角点，或拾取构件图元</span>
    <span className="ml-auto mr-[12px] whitespace-nowrap">43.4783 FPS</span>
  </div>
)

const apps = [
  <svg width="24" height="24" viewBox="0 0 24 24" fill="none"><path d="M3 13h19c0-6-4-10-10-10C6 3 1 8 1 14c0 6 5 9 10 9 4 0 7-1 9-3v-4c-2 2-5 3-8 3-3 0-5-1-6-4z" fill="#0c7cd5" /><path d="M7 9h10c-1-2-3-3-5-3s-4 1-5 3z" fill="#efe9c0" /></svg>,
  <svg width="24" height="24" viewBox="0 0 24 24"><circle cx="12" cy="12" r="12" fill="#2b95f0" /><path d="M5 8l15-2-7 12-2-5z" fill="#fff" /></svg>,
  <svg width="24" height="22" viewBox="0 0 24 22"><ellipse cx="9" cy="9" rx="9" ry="8" fill="#5cc83c" /><ellipse cx="17" cy="15" rx="7" ry="6" fill="#f4f4f4" /><circle cx="6" cy="7" r="1" fill="#1a5" /><circle cx="11" cy="7" r="1" fill="#1a5" /><circle cx="15" cy="14" r="1" fill="#888" /><circle cx="19" cy="14" r="1" fill="#888" /></svg>,
  <svg width="24" height="24" viewBox="0 0 24 24"><circle cx="12" cy="12" r="11" fill="#2c83dc" stroke="#fff" /><path d="M16 7c-2-2-8-1-7 2s7 2 7 6-6 4-9 2" stroke="#fff" strokeWidth="2.500" fill="none" /></svg>,
  <svg width="24" height="24" viewBox="0 0 24 24"><path d="M0 0h24v24H0z" fill="#6c7a8c" /><path d="M2 2h20v20H2z" fill="#0c5cb8" /><text x="12" y="16" textAnchor="middle" fontSize="9" fontWeight="bold" fill="#cfe0f5">CAD</text></svg>,
  <div className="w-6 h-6 rounded-[4px] bg-gradient-to-b from-[#3f9af0] to-[#1470e0] flex items-center justify-center"><svg width="16" height="16" viewBox="0 0 20 20"><path d="M2 4h16v4h-6v10H8V8H2z" fill="#fff" /></svg></div>,
]

const Taskbar = () => (
  <div className="h-[40px] flex items-center bg-[linear-gradient(90deg,#f0e4e0_0%,#ece8a8_18%,#ecebac_32%,#e8dfd5_50%,#dfe0b8_68%,#e6ea9e_100%)] relative">
    <div className="flex items-center h-full">
      <div className="w-[48px] flex items-center justify-center">
        <svg width="16" height="16" viewBox="0 0 16 16"><path d="M0 2.500L7 1.500v6H0zM8 1.300L16 0v7.500H8zM0 8.500h7v6l-7-1zM8 8.500h8V16l-8-1.300z" fill="#000" /></svg>
      </div>
      <div className="w-[48px] flex items-center justify-center">
        <svg width="16" height="16" viewBox="0 0 16 16" fill="none"><circle cx="8" cy="8" r="6.500" stroke="#111" strokeWidth="2" /></svg>
      </div>
      <div className="w-[48px] flex items-center justify-center">
        <svg width="18" height="16" viewBox="0 0 18 16" fill="none"><path d="M1 0v1.500h11V0M1 16v-1.500h11V16M1 5h11v6H1zM15 1h2M15 7h2M15 13h2" stroke="#111" strokeWidth="1.300" /></svg>
      </div>
      <div className="flex ml-[7px]">
        {apps.map((a, i) => (
          <div key={i} className={`h-[40px] flex items-center justify-center border-b-[3px] border-[#0a7bd8] pt-[3px] ${i === 5 ? 'w-[48px] bg-[#f5f5d8] ml-[5px]' : i === 0 ? 'w-[40px]' : 'w-[40px] ml-[9px]'}`}>{a}</div>
        ))}
      </div>
    </div>
    <div className="ml-auto flex items-center h-full text-xs text-[#222]">
      <svg width="12" height="7" viewBox="0 0 12 7" fill="none"><path d="M.5 6.500l5.500-6 5.500 6" stroke="#222" /></svg>
      <svg width="14" height="14" viewBox="0 0 14 14" fill="none" className="ml-[12px]"><path d="M1 13a12 12 0 0112-12M4 13a9 9 0 019-9M7 13a6 6 0 016-6" stroke="#333" strokeDasharray="2 1" /><circle cx="12" cy="12" r="1.500" fill="#111" /></svg>
      <svg width="15" height="12" viewBox="0 0 15 12" className="ml-[9px]"><path d="M4 2h10v8H4z" fill="#222" /><path d="M2 0v4M0 6h4" stroke="#222" /></svg>
      <svg width="14" height="14" viewBox="0 0 14 14" fill="none" className="ml-[8px]"><path d="M1 5h3l4-3v10L4 9H1z" stroke="#222" /><path d="M10 4c1 2 1 4 0 6M12 2c2 3 2 7 0 10" stroke="#888" /></svg>
      <span className="ml-[11px] text-[13px] text-[#777]">中</span>
      <div className="ml-[15px] w-[15px] h-[16px] rounded-[3px] bg-[#f0521e] text-white text-[13px] font-bold leading-[16px] text-center">S</div>
      <div className="ml-[17px] w-[60px] flex flex-col items-center leading-[19px]">
        <span>15:37</span>
        <span>2020/8/6</span>
      </div>
      <svg width="16" height="16" viewBox="0 0 16 16" fill="none" className="ml-[18px] mr-[26px]"><path d="M.5.5h15v12h-5l-2.500 3-2.500-3h-5z" stroke="#222" /></svg>
    </div>
  </div>
)

const App = () => {
  return (
    <div className="w-[1366px] h-[768px] flex flex-col overflow-hidden bg-white font-['Noto_Sans','Noto_Sans_CJK_SC',sans-serif]">
      <TitleBar />
      <ComboBar />
      <div className="flex h-[628px] bg-[#f3f3f3] shrink-0">
        <NavPanel />
        <div className="w-[280px] ml-[4px] flex flex-col border-x border-[#b4b4b4]">
          <DrawingPanel />
          <div className="h-[6px] bg-[#f0f0f0] shrink-0" />
          <PropPanel />
        </div>
        <div className="w-[4px] shrink-0 pt-[265px]">
          <div className="w-full h-[100px] bg-[#555]" />
        </div>
        <div className="flex-1 bg-black relative overflow-hidden">
          <Drawing />
          <CadTools />
        </div>
      </div>
      <StatusBar />
      <Taskbar />
    </div>
  )
}

export default App
